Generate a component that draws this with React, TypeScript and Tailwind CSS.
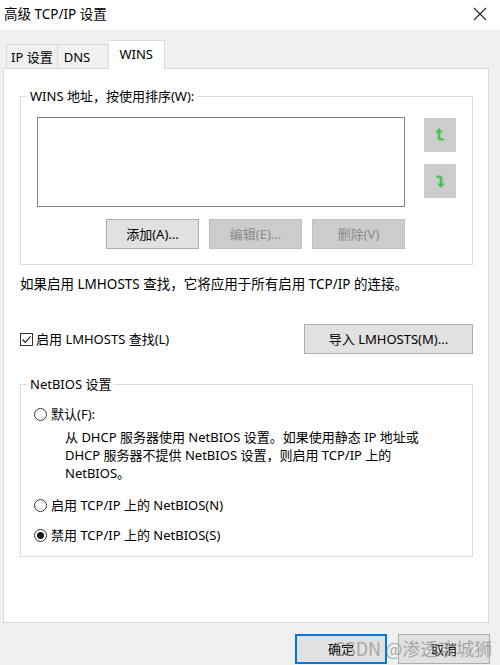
import React from 'react';

const font = "font-['Noto_Sans','Noto_Sans_CJK_SC',sans-serif]";

const UpIcon = () => (
  <svg width="12" height="16" viewBox="0 0 12 16" fill="none">
    <path d="M5 1 L1 5.5 H3.6 V10.5 Q3.6 13.6 6.8 13.6 H10 V11.2 H7.4 Q6.4 11.2 6.4 10.2 V5.5 H9 Z" fill="#4cc34c" />
  </svg>
);

const DownIcon = () => (
  <svg width="12" height="16" viewBox="0 0 12 16" fill="none">
    <path d="M7 15 L11 10.5 H8.4 V5.5 Q8.4 2.4 5.2 2.4 H2 V4.8 H4.6 Q5.6 4.8 5.6 5.8 V10.5 H3 Z" fill="#4cc34c" />
  </svg>
);

const WinButton = ({
  label,
  disabled,
  className = '',
}: {
  label: string;
  disabled?: boolean;
  className?: string;
}) => (
  <button
    className={`h-[30px] border text-[13px] leading-[18px] ${
      disabled
        ? 'bg-[#cccccc] border-[#bfbfbf] text-[#8a8a8a]'
        : 'bg-[#e1e1e1] border-[#adadad] text-black'
    } ${className}`}
  >
    {label}
  </button>
);

const Radio = ({ checked, label }: { checked?: boolean; label: string }) => (
  <label className="flex items-center h-[18px]">
    <span className="w-[13px] h-[13px] rounded-full border border-[#333] bg-white flex items-center justify-center">
      {checked && <span className="w-[7px] h-[7px] rounded-full bg-[#1a1a1a]" />}
    </span>
    <span className="ml-[4px]">{label}</span>
  </label>
);

export default function App() {
  return (
    <div className={`w-[500px] h-[665px] bg-[#f0f0f0] text-[13px] leading-[18px] text-black relative overflow-hidden ${font}`}>
      {/* Title bar */}
      <div className="h-[30px] bg-white flex items-center justify-between pl-[4px] pr-[13px]">
        <span className="text-[13.5px] leading-[18px] -mt-[3px]">高级 TCP/IP 设置</span>
        <svg width="14" height="14" viewBox="0 0 14 14" className="-mt-[3px]">
          <path d="M1 1 L13 13 M13 1 L1 13" stroke="#222" strokeWidth="1.1" />
        </svg>
      </div>

      {/* Tabs */}
      <div className="pt-[10px] pl-[6px] flex items-end h-[38px] relative z-10">
        <div className="h-[24px] px-[4px] border border-b-0 border-[#d9d9d9] bg-[#f0f0f0] flex items-center">IP 设置</div>
        <div className="h-[24px] w-[51px] border border-b-0 border-l-0 border-[#d9d9d9] bg-[#f0f0f0] flex items-center pl-[6px]">DNS</div>
        <div className="h-[29px] w-[56px] -mb-[1px] border border-b-0 border-l-0 border-[#d9d9d9] bg-white flex items-center justify-center pb-[2px]">WINS</div>
      </div>

      {/* Tab panel */}
      <div className="ml-[3px] w-[486px] h-[555px] bg-white border border-[#d9d9d9] px-[16px]">
        <fieldset className="mt-[18px] w-[453px] border border-[#dcdcdc] pl-[16px] pr-[16px] pt-[12px] pb-[15px]">
          <legend className="-ml-[10px] px-[3px] leading-[18px]">WINS 地址，按使用排序(W):</legend>
          <div className="flex">
            <div className="w-[368px] h-[90px] border border-[#828282] bg-white" />
            <div className="ml-[19px] pt-[1px] flex flex-col gap-[12px]">
              <button className="w-[32px] h-[34px] bg-[#cccccc] flex items-center justify-center">
                <UpIcon />
              </button>
              <button className="w-[32px] h-[34px] bg-[#cccccc] flex items-center justify-center">
                <DownIcon />
              </button>
            </div>
          </div>
          <div className="w-[368px] mt-[12px] flex justify-end gap-[10px]">
            <WinButton label="添加(A)..." className="w-[93px]" />
            <WinButton label="编辑(E)..." disabled className="w-[93px]" />
            <WinButton label="删除(V)" disabled className="w-[93px]" />
          </div>
        </fieldset>

        <p className="mt-[10px] text-[13.5px]">如果启用 LMHOSTS 查找，它将应用于所有启用 TCP/IP 的连接。</p>

        <div className="mt-[31px] flex items-center justify-between w-[453px]">
          <label className="flex items-center">
            <span className="w-[13px] h-[13px] border border-[#333] bg-white flex items-center justify-center">
              <svg width="11" height="11" viewBox="0 0 11 11">
                <path d="M1.5 5.5 L4.3 8.3 L9.6 2.3" stroke="#222" strokeWidth="1.2" fill="none" />
              </svg>
            </span>
            <span className="ml-[3px]">启用 LMHOSTS 查找(L)</span>
          </label>
          <WinButton label="导入 LMHOSTS(M)..." className="w-[169px] h-[29px]" />
        </div>

        <fieldset className="mt-[21px] w-[453px] border border-[#dcdcdc] pl-[13px] pr-[14px] pt-[12px] pb-[12px]">
          <legend className="-ml-[7px] px-[3px] leading-[18px]">NetBIOS 设置</legend>
          <Radio label="默认(F):" />
          <p className="mt-[5px] pl-[31px] pr-[20px]">
            从 DHCP 服务器使用 NetBIOS 设置。如果使用静态 IP 地址或 DHCP 服务器不提供 NetBIOS 设置，则启用 TCP/IP 上的 NetBIOS。
          </p>
          <div className="mt-[14px]">
            <Radio label="启用 TCP/IP 上的 NetBIOS(N)" />
          </div>
          <div className="mt-[12px]">
            <Radio checked label="禁用 TCP/IP 上的 NetBIOS(S)" />
          </div>
        </fieldset>
      </div>

      {/* Bottom buttons */}
      <div className="mt-[11px] flex justify-end gap-[11px] pr-[10px]">
        <WinButton label="确定" className="w-[92px] h-[29px] !border-2 !border-[#0078d7]" />
        <WinButton label="取消" className="w-[92px] h-[29px]" />
      </div>

      {/* Watermark */}
      <div className="absolute left-[334px] top-[636px] text-[18px] leading-[24px] text-[#8c8c8c]/70 pointer-events-none font-['Noto_Sans_CJK_SC',sans-serif]">
        CSDN @渗透攻城狮
      </div>
    </div>
  );
}
